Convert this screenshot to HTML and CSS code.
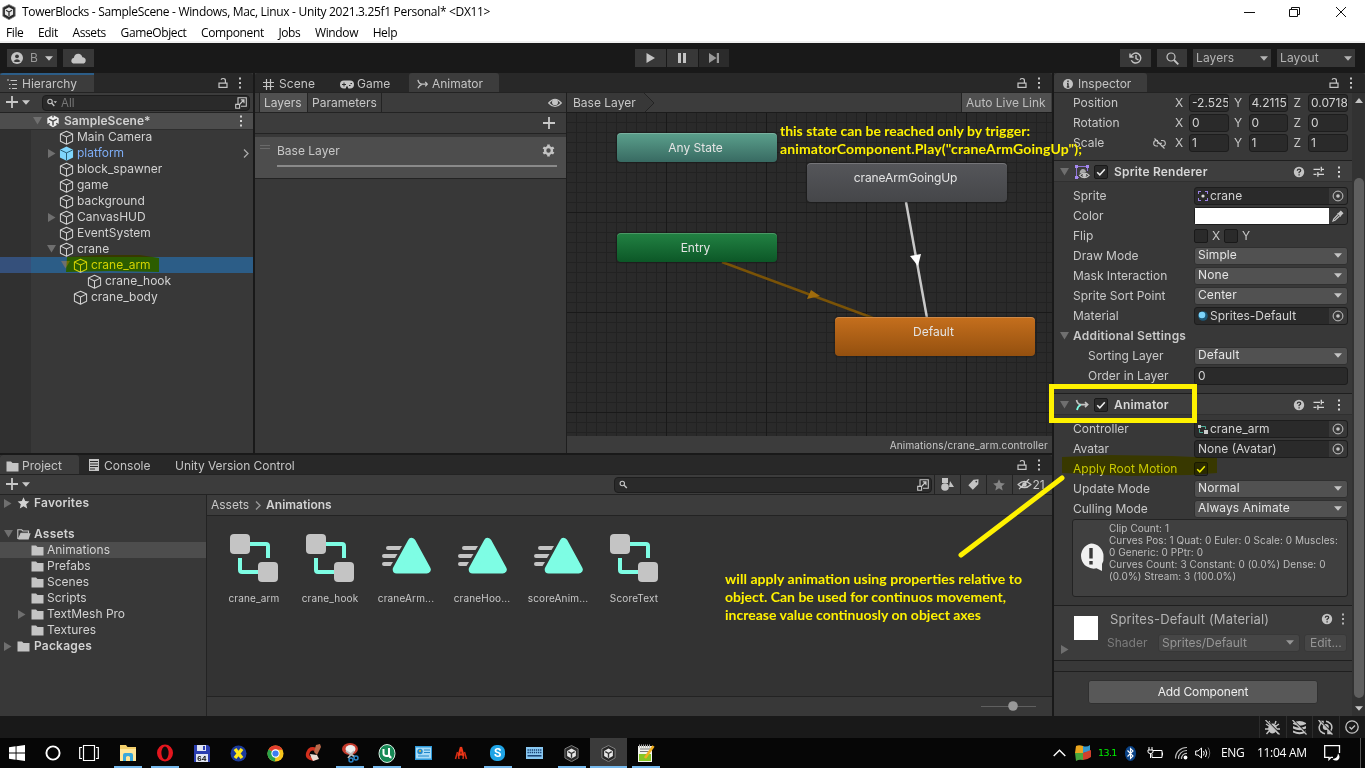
FILE: index.html
```html
<!DOCTYPE html>
<html lang="en">
<head>
<meta charset="utf-8">
<title>TowerBlocks - SampleScene</title>
<link rel="stylesheet" href="styles.css">
</head>
<body>
<svg class="defs" width="0" height="0">
  <defs>
    <symbol id="cube" viewBox="0 0 16 16"><path d="M8 1.300 14.500 4.200V12L8 15.200 1.500 12V4.200ZM1.700 4.400 8 7.400 14.300 4.400M8 7.400V15" fill="none" stroke="currentColor" stroke-width="1.1" stroke-linejoin="round"/></symbol>
    <symbol id="prefab" viewBox="0 0 16 16"><path d="M8 .6 15 3.900V12.200L8 15.700 1 12.200V3.900Z" fill="#7fd6fd"/><path d="M1.400 4.200 8 7.300 14.600 4.200M8 7.300V15.400" fill="none" stroke="#23566e" stroke-width="1"/></symbol>
    <symbol id="unity" viewBox="0 0 16 16"><path d="M8 1 14.5 4.5V11.5L8 15 1.5 11.5V4.5Z" fill="#eee"/><path d="M8 8.2V13M8 8.2 3.6 5.8M8 8.2 12.4 5.8M8 0V4M1 12.5 4.4 10.6M15 12.5 11.6 10.6" stroke="#4d4d4d" stroke-width="1.7"/></symbol>
    <symbol id="unityapp" viewBox="0 0 16 16"><path d="M8 .5 14.2 3.6V12.2L8 15.7 1.8 12.2V3.6Z" fill="#282828" stroke="#8b8b8b" stroke-width=".8"/><path d="M8 3.2 12.1 5.6V10.4L8 12.8 3.9 10.4V5.6Z" fill="#e8e8e8"/><path d="M8 8V12M8 8 5 6.2M8 8 11 6.2" stroke="#333" stroke-width="1.3"/></symbol>
    <symbol id="lock" viewBox="0 0 12 12"><path d="M2 6.2H10V10.3H2ZM8.4 6V3.6Q8.4 1.5 6.2 1.5 4.7 1.5 4 2.6" fill="none" stroke="currentColor" stroke-width="1.2"/></symbol>
    <symbol id="dots" viewBox="0 0 4 12"><path d="M1 .5H3V2.5H1ZM1 5H3V7H1ZM1 9.5H3V11.5H1Z" fill="currentColor"/></symbol>
    <symbol id="down" viewBox="0 0 8 5"><path d="M0 .3H8L4 4.7Z" fill="currentColor"/></symbol>
    <symbol id="fold" viewBox="0 0 9 8"><path d="M0 0H9L4.5 7.5Z" fill="#6f6f6f"/></symbol>
    <symbol id="unfold" viewBox="0 0 8 9"><path d="M0 0V9L7.5 4.5Z" fill="#6f6f6f"/></symbol>
    <symbol id="plus" viewBox="0 0 12 12"><path d="M6 0V12M0 6H12" stroke="currentColor" stroke-width="1.8"/></symbol>
    <symbol id="popout" viewBox="0 0 12 12"><path d="M3 7V.7H11.3V9.3H6M.7 7.4H4.6V11.3H.7ZM5 7 8.800 3M5.800 2.900H9V6.300" fill="none" stroke="currentColor" stroke-width="1.1"/></symbol>
    <symbol id="folder" viewBox="0 0 13 11"><path d="M.5 .5H5L6.5 2H12.5V10.5H.5Z" fill="#c4c4c4"/></symbol>
    <symbol id="folderopen" viewBox="0 0 14 11"><path d="M.8 10V.8H4.6L5.8 2H11.5V4.3H4L1.6 10" fill="none" stroke="#c4c4c4" stroke-width="1.1"/><path d="M4 4.2H13.6L11.6 10.6H1.3Z" fill="#c4c4c4"/></symbol>
    <symbol id="star" viewBox="0 0 12 12"><path d="M6 .2 7.7 4.1 11.9 4.5 8.7 7.3 9.7 11.5 6 9.3 2.3 11.5 3.3 7.3 .1 4.5 4.3 4.1Z" fill="currentColor"/></symbol>
    <symbol id="help" viewBox="0 0 12 12"><circle cx="6" cy="6" r="5.2" fill="#c4c4c4"/><path d="M4.3 4.7Q4.4 3.1 6 3.1 7.7 3.1 7.7 4.5 7.7 5.4 6.1 6.3V7.2M6.1 8.2V9.5" fill="none" stroke="#333" stroke-width="1.3"/></symbol>
    <symbol id="sliders" viewBox="0 0 12 12"><path d="M.5 3.3H7M8.3 3.3H11M8.3 .8V5.6M.5 8.3H3.5M4.9 6V10.7M4.9 8.3H11" stroke="currentColor" stroke-width="1.3"/></symbol>
    <symbol id="target" viewBox="0 0 12 12"><circle cx="6" cy="6" r="4.9" fill="none" stroke="currentColor" stroke-width="1"/><circle cx="6" cy="6" r="1.8" fill="currentColor"/></symbol>
    <symbol id="check" viewBox="0 0 10 10"><path d="M1.2 5.2 3.8 7.8 8.8 2.2" fill="none" stroke="currentColor" stroke-width="1.5"/></symbol>
    <symbol id="anim" viewBox="0 0 12 12"><path d="M1 1Q2 5.5 5.5 5.6H11M9 3.2 11.2 5.6 9 8M5.2 5.8Q2.3 7 1 10" fill="none" stroke="currentColor" stroke-width="1.4"/></symbol>
    <symbol id="controller" viewBox="0 0 48 48"><path d="M20 10H36Q38 10 38 12V24M10 24V36Q10 38 12 38H28" fill="none" stroke="#7efde4" stroke-width="4"/><rect width="20" height="20" rx="4" fill="#c4c4c4"/><rect x="28" y="28" width="20" height="20" rx="4" fill="#c4c4c4"/></symbol>
    <symbol id="clip" viewBox="0 0 50 48"><path d="M7 12H21L18.500 16H7Q5 16 5 14T7 12ZM3 20H16.500L14 24H3Q1 24 1 22T3 20ZM3 28H12L9.500 32H3Q1 32 1 30T3 28Z" fill="#c4c4c4"/><path d="M30.700 8 45.700 35.500H15.700Z" fill="#7efde4" stroke="#7efde4" stroke-width="8" stroke-linejoin="round"/></symbol>
    <symbol id="eyeoff" viewBox="0 0 16 12"><path d="M1 6Q8-1 15 6 8 13 1 6ZM2 11 13 0" fill="none" stroke="currentColor" stroke-width="1.3"/><circle cx="8" cy="6" r="2.4" fill="currentColor"/></symbol>
  </defs>
</svg>

<div class="screen">
  <header class="titlebar">
    <div class="title-row">
      <svg width="16" height="16"><use href="#unityapp"/></svg>
      <span class="win-title">TowerBlocks - SampleScene - Windows, Mac, Linux - Unity 2021.3.25f1 Personal* &lt;DX11&gt;</span>
      <svg class="win-buttons" width="106" height="12" viewBox="0 0 106 12"><path d="M0 6.500H11M45.500 3.500H53.500V10.500H45.500ZM47.500 3.500V1.500H55.500V8.500H53.500M92 1 102 11M102 1 92 11" fill="none" stroke="#111" stroke-width="1"/></svg>
    </div>
    <nav class="menus"><span>File</span><span>Edit</span><span>Assets</span><span>GameObject</span><span>Component</span><span>Jobs</span><span>Window</span><span>Help</span></nav>
  </header>

  <div class="toolbar">
    <div class="tb account"><svg width="12" height="12" viewBox="0 0 12 12"><circle cx="6" cy="6" r="6" fill="#c4c4c4"/><circle cx="6" cy="4.300" r="1.900" fill="#383838"/><path d="M2.500 9.200Q6 5.200 9.500 9.200Q6 11 2.500 9.200Z" fill="#383838"/></svg><span class="dim">B</span><svg width="8" height="5"><use href="#down"/></svg></div>
    <div class="tb cloud"><svg width="15" height="11" viewBox="0 0 15 11"><path d="M3.500 10.500Q.3 10.500 .3 7.700 .3 5.200 2.900 4.800 3.500 .7 7.300 .7 10.500 .7 11.400 4.200 14.700 4.400 14.700 7.400 14.700 10.500 11.500 10.500Z" fill="#c4c4c4"/></svg></div>
    <div class="tb play"><svg width="9" height="10" viewBox="0 0 9 10"><path d="M.5 0V10L9 5Z" fill="#c4c4c4"/></svg></div>
    <div class="tb pause"><svg width="9" height="10" viewBox="0 0 9 10"><path d="M0 0H3V10H0ZM5 0H8V10H5Z" fill="#c4c4c4"/></svg></div>
    <div class="tb step"><svg width="10" height="10" viewBox="0 0 10 10"><path d="M0 0V10L7.500 5ZM7.800 0H10V10H7.800Z" fill="#999"/></svg></div>
    <div class="tb history"><svg width="13" height="12" viewBox="0 0 13 12"><path d="M2 4.500A5 5 0 1 1 2.300 8.300M1 1.500V5H4.600M7 3V6.500L9.500 8" fill="none" stroke="#c4c4c4" stroke-width="1.400"/></svg></div>
    <div class="tb find"><svg width="13" height="13" viewBox="0 0 13 13"><circle cx="5" cy="5" r="4" fill="none" stroke="#c4c4c4" stroke-width="1.200"/><path d="M8 8 12.300 12.300" stroke="#c4c4c4" stroke-width="1.800"/></svg></div>
    <div class="tb drop layers"><span>Layers</span><svg width="8" height="5"><use href="#down"/></svg></div>
    <div class="tb drop layout"><span>Layout</span><svg width="8" height="5"><use href="#down"/></svg></div>
  </div>

  <main class="workspace">
    <div class="left">
      <div class="top-row">
        <section class="panel hierarchy">
          <div class="tabs"><div class="tab on focus"><svg width="12" height="11" viewBox="0 0 12 11"><path d="M0 1H2M3.500 1.500H10M2 5.500H3.500M5 5.500H10M2 9.500H3.500M5 9.500H10" stroke="#c4c4c4" stroke-width="1.200"/></svg>Hierarchy</div><div class="tools"><svg width="12" height="12"><use href="#lock"/></svg><svg width="4" height="12"><use href="#dots"/></svg></div></div>
          <div class="bar">
            <svg width="12" height="12"><use href="#plus"/></svg><svg class="caret" width="8" height="5"><use href="#down"/></svg>
            <div class="search"><svg width="10" height="9" viewBox="0 0 10 9"><circle cx="3" cy="3.500" r="2.200" fill="none" stroke="#c4c4c4" stroke-width="1.100"/><path d="M4.600 5.100 7.300 8" stroke="#c4c4c4" stroke-width="1.400"/><path d="M6.500 3.300H10L8.300 5.300Z" fill="#c4c4c4"/></svg><span class="ph">All</span><svg class="pop" width="12" height="12"><use href="#popout"/></svg></div>
          </div>
          <div class="tree">
            <div class="row scene"><svg class="f" width="9" height="8"><use href="#fold"/></svg><svg width="14" height="14" viewBox="0 0 16 16"><use href="#unity" width="16" height="16"/></svg><b>SampleScene*</b><svg class="end" width="4" height="12"><use href="#dots"/></svg></div>
            <div class="row d1"><i></i><svg width="15" height="15"><use href="#cube"/></svg><span>Main Camera</span></div>
            <div class="row d1 blue"><i><svg width="8" height="9"><use href="#unfold"/></svg></i><svg width="15" height="15"><use href="#prefab"/></svg><span>platform</span><svg class="end chev" width="6" height="9" viewBox="0 0 6 9"><path d="M1 .5 5 4.500 1 8.500" fill="none" stroke="#aaa" stroke-width="1.300"/></svg></div>
            <div class="row d1"><i></i><svg width="15" height="15"><use href="#cube"/></svg><span>block_spawner</span></div>
            <div class="row d1"><i></i><svg width="15" height="15"><use href="#cube"/></svg><span>game</span></div>
            <div class="row d1"><i></i><svg width="15" height="15"><use href="#cube"/></svg><span>background</span></div>
            <div class="row d1"><i><svg width="8" height="9"><use href="#unfold"/></svg></i><svg width="15" height="15"><use href="#cube"/></svg><span>CanvasHUD</span></div>
            <div class="row d1"><i></i><svg width="15" height="15"><use href="#cube"/></svg><span>EventSystem</span></div>
            <div class="row d1"><i class="open"><svg width="9" height="8"><use href="#fold"/></svg></i><svg width="15" height="15"><use href="#cube"/></svg><span>crane</span></div>
            <div class="row d2 sel"><i class="open"><svg width="9" height="8"><use href="#fold"/></svg></i><svg width="15" height="15"><use href="#cube"/></svg><span>crane_arm</span></div>
            <div class="row d3"><i></i><svg width="15" height="15"><use href="#cube"/></svg><span>crane_hook</span></div>
            <div class="row d2"><i></i><svg width="15" height="15"><use href="#cube"/></svg><span>crane_body</span></div>
          </div>
        </section>

        <section class="panel animator">
          <div class="tabs">
            <div class="tab t-scene"><svg width="11" height="11" viewBox="0 0 11 11"><path d="M3.500 0V11M7.500 0V11M0 3.500H11M0 7.500H11" stroke="#c4c4c4" stroke-width="1.200"/></svg>Scene</div>
            <div class="tab t-game"><svg width="14" height="9" viewBox="0 0 14 9"><rect y=".5" width="14" height="8" rx="4" fill="#c4c4c4"/><path d="M2 4.500H6M4 2.500V6.500M9 5.500H10.500M10.500 3.500H12M6 9 7 6.500 8 9" stroke="#282828"/></svg>Game</div>
            <div class="tab on t-anim"><svg width="11" height="11" viewBox="0 0 12 12"><use href="#anim" width="12" height="12"/></svg>Animator</div>
            <div class="tools"><svg width="12" height="12"><use href="#lock"/></svg><svg width="4" height="12"><use href="#dots"/></svg></div>
          </div>
          <div class="anim-body">
            <div class="layers-col">
              <div class="bar sub"><span class="seg on">Layers</span><span class="seg">Parameters</span><svg class="eye" width="14" height="10" viewBox="0 0 14 10"><path d="M.7 5Q7-2.500 13.300 5 7 12 .7 5Z" fill="none" stroke="#c4c4c4" stroke-width="1.200"/><circle cx="7" cy="4.200" r="3" fill="#c4c4c4"/></svg></div>
              <div class="add"><svg width="12" height="12"><use href="#plus"/></svg></div>
              <div class="layer-item">
                <div class="grip"></div><span>Base Layer</span>
                <svg width="13" height="13" viewBox="0 0 13 13"><circle cx="6.500" cy="6.500" r="3.400" fill="none" stroke="#c4c4c4" stroke-width="2.400"/><path d="M6.500 .5V3M6.500 10V12.500M1.300 3.500 3.300 4.700M9.700 8.300 11.700 9.500M11.700 3.500 9.700 4.700M3.300 8.300 1.300 9.500" stroke="#c4c4c4" stroke-width="2.600"/></svg>
                <div class="weight"></div>
              </div>
            </div>
            <div class="graph-col">
              <div class="bar crumb"><span>Base Layer</span><svg width="12" height="20" viewBox="0 0 12 20"><path d="M0 0 10 10 0 20Z" fill="#383838"/><path d="M0 0 10 10 0 20" fill="none" stroke="#232323"/></svg><span class="live">Auto Live Link</span></div>
              <div class="canvas">
                <svg class="wires" width="485" height="323" viewBox="0 0 485 323">
                  <path d="M339 89 360 205" stroke="#c9c9c9" stroke-width="2.500"/><path d="M343 143 354 141 351 153Z" fill="#fff"/>
                  <path d="M155 149 306 205" stroke="#7a5307" stroke-width="2.500"/><path d="M244 177 253 183 240 186Z" fill="#a06c0c"/>
                </svg>
                <div class="node any">Any State</div>
                <div class="node goingup">craneArmGoingUp</div>
                <div class="node entry">Entry</div>
                <div class="node def">Default</div>
              </div>
              <div class="path">Animations/crane_arm.controller</div>
            </div>
          </div>
        </section>
      </div>

      <section class="panel project">
        <div class="tabs">
          <div class="tab on t-proj"><svg width="13" height="11"><use href="#folder"/></svg>Project</div>
          <div class="tab t-con"><svg width="10" height="12" viewBox="0 0 10 12"><path d="M0 0H10V12H0Z" fill="#c4c4c4"/><path d="M1 2.500H9M1 5H9M1 7.500H9M1 10H6" stroke="#282828"/></svg>Console</div>
          <div class="tab t-uvc">Unity Version Control</div>
          <div class="tools"><svg width="12" height="12"><use href="#lock"/></svg><svg width="4" height="12"><use href="#dots"/></svg></div>
        </div>
        <div class="bar">
          <svg width="12" height="12"><use href="#plus"/></svg><svg class="caret" width="8" height="5"><use href="#down"/></svg>
          <div class="search wide"><svg width="9" height="9" viewBox="0 0 9 9"><circle cx="3.300" cy="3.500" r="2.200" fill="none" stroke="#c4c4c4" stroke-width="1.100"/><path d="M4.900 5.100 7.800 8" stroke="#c4c4c4" stroke-width="1.400"/></svg><svg class="pop" width="12" height="12"><use href="#popout"/></svg></div>
          <div class="pb"><svg width="13" height="13" viewBox="0 0 13 13"><path d="M1 0H7V5H1ZM9 3 13 9H8Z" fill="#c4c4c4"/><circle cx="4" cy="9" r="3.800" fill="#c4c4c4"/></svg></div>
          <div class="pb"><svg width="11" height="11" viewBox="0 0 11 11"><path d="M5.500 .8 10.500 .3 10.300 5.300 4.800 10.800 .3 6.200Z" fill="#c4c4c4"/><circle cx="8.300" cy="2.600" r=".9" fill="#383838"/></svg></div>
          <div class="pb dimstar"><svg width="12" height="12"><use href="#star"/></svg></div>
          <div class="pb hid"><svg width="15" height="11"><use href="#eyeoff"/></svg><span>21</span></div>
        </div>
        <div class="proj-body">
          <div class="folders">
            <div class="row"><i><svg width="8" height="9"><use href="#unfold"/></svg></i><svg width="13" height="12"><use href="#star"/></svg><b>Favorites</b></div>
            <div class="row gap"><i><svg width="9" height="8"><use href="#fold"/></svg></i><svg width="14" height="11"><use href="#folderopen"/></svg><b>Assets</b></div>
            <div class="row k on"><i></i><svg width="13" height="11"><use href="#folder"/></svg><span>Animations</span></div>
            <div class="row k"><i></i><svg width="13" height="11"><use href="#folder"/></svg><span>Prefabs</span></div>
            <div class="row k"><i></i><svg width="13" height="11"><use href="#folder"/></svg><span>Scenes</span></div>
            <div class="row k"><i></i><svg width="13" height="11"><use href="#folder"/></svg><span>Scripts</span></div>
            <div class="row k"><i><svg width="8" height="9"><use href="#unfold"/></svg></i><svg width="13" height="11"><use href="#folder"/></svg><span>TextMesh Pro</span></div>
            <div class="row k"><i></i><svg width="13" height="11"><use href="#folder"/></svg><span>Textures</span></div>
            <div class="row"><i><svg width="8" height="9"><use href="#unfold"/></svg></i><svg width="13" height="11"><use href="#folder"/></svg><b>Packages</b></div>
          </div>
          <div class="assets">
            <div class="where"><span>Assets</span><svg width="6" height="9" viewBox="0 0 6 9"><path d="M1 .5 5 4.500 1 8.500" fill="none" stroke="#999" stroke-width="1.400"/></svg><b>Animations</b></div>
            <div class="grid">
              <div class="asset"><svg width="48" height="48"><use href="#controller"/></svg><span>crane_arm</span></div>
              <div class="asset"><svg width="48" height="48"><use href="#controller"/></svg><span>crane_hook</span></div>
              <div class="asset"><svg width="50" height="48"><use href="#clip"/></svg><span>craneArm...</span></div>
              <div class="asset"><svg width="50" height="48"><use href="#clip"/></svg><span>craneHoo...</span></div>
              <div class="asset"><svg width="50" height="48"><use href="#clip"/></svg><span>scoreAnim...</span></div>
              <div class="asset"><svg width="48" height="48"><use href="#controller"/></svg><span>ScoreText</span></div>
            </div>
            <div class="zoombar"><svg width="56" height="10" viewBox="0 0 56 10"><path d="M0 5.500H55" stroke="#606060"/><circle cx="32" cy="5" r="4.800" fill="#999"/></svg></div>
          </div>
        </div>
      </section>
    </div>

    <section class="panel inspector">
      <div class="tabs"><div class="tab on t-insp"><svg width="10" height="10" viewBox="0 0 10 10"><circle cx="5" cy="5" r="5" fill="#c4c4c4"/><path d="M5 1.500V3.200M5 4.200V8.300M3.800 8H6.300M4 4.600H5" stroke="#333" stroke-width="1.400"/></svg>Inspector</div><div class="tools"><svg width="12" height="12"><use href="#lock"/></svg><svg width="4" height="12"><use href="#dots"/></svg></div></div>
      <div class="insp-wrap">
        <div class="insp">
          <div class="group g0">
            <div class="p"><label>Position</label><em>X</em><span class="num">-2.525</span><em>Y</em><span class="num">4.2115</span><em>Z</em><span class="num">0.0718</span></div>
            <div class="p"><label>Rotation</label><em>X</em><span class="num">0</span><em>Y</em><span class="num">0</span><em>Z</em><span class="num">0</span></div>
            <div class="p"><label>Scale<svg class="unlink" width="13" height="11" viewBox="0 0 13 11"><path d="M5 2.500H3.500Q.7 2.500 .7 5.300T3.500 8H5M8 2.500H9.500Q12.300 2.500 12.300 5.300T9.500 8H8M4 5.300H9M1.500 .5 11.500 10.500" fill="none" stroke="#c4c4c4" stroke-width="1.100"/></svg></label><em>X</em><span class="num">1</span><em>Y</em><span class="num">1</span><em>Z</em><span class="num">1</span></div>
          </div>
          <div class="comp">
            <svg width="9" height="8"><use href="#fold"/></svg>
            <svg class="ci" width="15" height="14" viewBox="0 0 15 14"><path d="M1.500 1.500H12.500V6M1.500 1.500V12.500H4" fill="none" stroke="#8f74d8"/><path d="M0 0H3V3H0ZM11 0H14V3H11ZM0 11H3V14H0Z" fill="#a68af0"/><path d="M4.500 8.500Q5 4 8 4 10.500 4 11 7Z" fill="#aaa"/><path d="M4.500 10.300Q9.300 5.800 14.200 10.300 9.300 15 4.500 10.300Z" fill="#333" stroke="#c4c4c4" stroke-width="1.100"/><circle cx="9.400" cy="10.200" r="1.900" fill="#c4c4c4"/></svg>
            <span class="cb"><svg width="10" height="10"><use href="#check"/></svg></span><b>Sprite Renderer</b>
            <svg class="h" width="12" height="12"><use href="#help"/></svg><svg width="12" height="12"><use href="#sliders"/></svg><svg width="4" height="12"><use href="#dots"/></svg>
          </div>
          <div class="group g1">
            <div class="p"><label>Sprite</label><span class="obj"><svg width="10" height="10" viewBox="0 0 10 10"><path d="M0 0H3V1H1V3H0ZM10 0H7V1H9V3H10ZM0 10H3V9H1V7H0ZM10 10H7V9H9V7H10Z" fill="#9b80e6"/><circle cx="5" cy="5" r="1.600" fill="#ddd"/></svg>crane<span class="tg"><svg width="12" height="12"><use href="#target"/></svg></span></span></div>
            <div class="p"><label>Color</label><span class="color"><span class="swatch"></span><svg width="12" height="12" viewBox="0 0 12 12"><path d="M6 4.500 1.700 9 1 11 3 10.300 7.500 6" fill="none" stroke="#c4c4c4" stroke-width="1.200"/><path d="M5 3.300 8.700 7 9.300 5.500 11.500 3.300 8.800 .5 6.600 2.700Z" fill="#c4c4c4"/></svg></span></div>
            <div class="p"><label>Flip</label><span class="cb"></span><em class="fx">X</em><span class="cb"></span><em class="fx">Y</em></div>
            <div class="p"><label>Draw Mode</label><span class="sel-box">Simple<svg width="8" height="5"><use href="#down"/></svg></span></div>
            <div class="p"><label>Mask Interaction</label><span class="sel-box">None<svg width="8" height="5"><use href="#down"/></svg></span></div>
            <div class="p"><label>Sprite Sort Point</label><span class="sel-box">Center<svg width="8" height="5"><use href="#down"/></svg></span></div>
            <div class="p"><label>Material</label><span class="obj"><svg width="10" height="10" viewBox="0 0 10 10"><circle cx="5" cy="5" r="4.800" fill="#1d5877"/><circle cx="4" cy="4" r="3.300" fill="#7cd3f9"/></svg>Sprites-Default<span class="tg"><svg width="12" height="12"><use href="#target"/></svg></span></span></div>
            <div class="p foldrow"><svg width="9" height="8"><use href="#fold"/></svg><b>Additional Settings</b></div>
            <div class="p in"><label>Sorting Layer</label><span class="sel-box">Default<svg width="8" height="5"><use href="#down"/></svg></span></div>
            <div class="p in"><label>Order in Layer</label><span class="txt">0</span></div>
          </div>
          <div class="comp">
            <svg width="9" height="8"><use href="#fold"/></svg>
            <svg class="ci" width="14" height="12" viewBox="0 0 14 12"><path d="M1 1Q2 5.500 5.500 5.600H12M9.500 3 12.200 5.600 9.500 8.200" fill="none" stroke="#c4c4c4" stroke-width="1.600"/><path d="M5.200 6Q2.300 7 1.500 11" fill="none" stroke="#7efde4" stroke-width="1.800"/></svg>
            <span class="cb"><svg width="10" height="10"><use href="#check"/></svg></span><b>Animator</b>
            <svg class="h" width="12" height="12"><use href="#help"/></svg><svg width="12" height="12"><use href="#sliders"/></svg><svg width="4" height="12"><use href="#dots"/></svg>
          </div>
          <div class="group g2">
            <div class="p"><label>Controller</label><span class="obj"><svg width="10" height="9" viewBox="0 0 10 9"><path d="M3 1.500H7.500V4M1.500 4V7.500H5" fill="none" stroke="#4fae9a"/><path d="M0 0H3V3H0ZM6 5H10V9H6Z" fill="#ccc"/></svg>crane_arm<span class="tg"><svg width="12" height="12"><use href="#target"/></svg></span></span></div>
            <div class="p"><label>Avatar</label><span class="obj">None (Avatar)<span class="tg"><svg width="12" height="12"><use href="#target"/></svg></span></span></div>
            <div class="p"><label>Apply Root Motion</label><span class="cb"><svg width="10" height="10"><use href="#check"/></svg></span></div>
            <div class="p"><label>Update Mode</label><span class="sel-box">Normal<svg width="8" height="5"><use href="#down"/></svg></span></div>
            <div class="p"><label>Culling Mode</label><span class="sel-box">Always Animate<svg width="8" height="5"><use href="#down"/></svg></span></div>
          </div>
          <div class="info">
            <svg width="27" height="29" viewBox="0 0 27 29"><path d="M13 .5A12.700 12.700 0 0 1 25.500 13Q26 18 24 21V28L18.500 25.300A12.700 12.700 0 1 1 13 .5Z" fill="#f0f0f0"/><path d="M13 5V15.500M13 18V21.500" stroke="#383838" stroke-width="3.400"/></svg>
            <p>Clip Count: 1<br>Curves Pos: 1 Quat: 0 Euler: 0 Scale: 0 Muscles:<br>0 Generic: 0 PPtr: 0<br>Curves Count: 3 Constant: 0 (0.0%) Dense: 0<br>(0.0%) Stream: 3 (100.0%)</p>
          </div>
          <div class="material">
            <div class="mat-side"><div class="thumb"></div><svg width="8" height="9"><use href="#unfold"/></svg></div>
            <div class="mat-main">
              <div class="mat-head"><span>Sprites-Default (Material)</span><svg width="12" height="12"><use href="#help"/></svg><svg width="4" height="12"><use href="#dots"/></svg></div>
              <div class="mat-shader"><label>Shader</label><span class="shader-box">Sprites/Default<svg width="8" height="5"><use href="#down"/></svg></span><span class="edit">Edit...</span></div>
            </div>
          </div>
          <div class="strip"></div>
          <button class="addc">Add Component</button>
        </div>
        <div class="scroll"><svg width="8" height="5" viewBox="0 0 8 5"><path d="M0 5H8L4 0Z" fill="#c4c4c4"/></svg><div class="thumbbar"></div><svg width="8" height="5"><use href="#down"/></svg></div>
      </div>
    </section>
  </main>

  <div class="status">
    <div><svg width="15" height="15" viewBox="0 0 15 15"><ellipse cx="7.500" cy="8.500" rx="4.300" ry="5" fill="#c4c4c4"/><path d="M5 4 4 1M10 4 11 1M4 6 1 4M11 6 14 4M4 9H0M11 9H15M4 11 1.500 14M11 11 13.500 14" stroke="#c4c4c4" stroke-width="1.400"/><path d="M2 1 15 14" stroke="#191919" stroke-width="1.600"/><path d="M.5 0 14.500 14.500" stroke="#c4c4c4" stroke-width="1.200"/></svg></div>
    <div><svg width="15" height="15" viewBox="0 0 15 15"><path d="M1 3Q7.500-1 14 3V4Q7.500 7.500 1 4ZM1 6Q7.500 9.500 14 6V8.500Q7.500 12 1 8.500ZM1 10.500Q7.500 14 14 10.500V12.500Q7.500 16 1 12.500Z" fill="#c4c4c4"/><path d="M2 1 15 14" stroke="#191919" stroke-width="1.600"/><path d="M.5 0 14.500 14.500" stroke="#c4c4c4" stroke-width="1.200"/></svg></div>
    <div><svg width="15" height="15" viewBox="0 0 15 15"><path d="M4.500 2A6.300 6.300 0 0 0 3 12M10.500 13A6.300 6.300 0 0 0 12 3M8 1.200A6.300 6.300 0 0 1 12 3.500M7 13.800A6.300 6.300 0 0 1 3 11.500M1 1.500H5V5M14 13.500H10V10" fill="none" stroke="#c4c4c4" stroke-width="1.500"/><circle cx="7.800" cy="7" r="3" fill="#c4c4c4"/><path d="M2 1 15 14" stroke="#191919" stroke-width="1.600"/><path d="M.5 0 14.500 14.500" stroke="#c4c4c4" stroke-width="1.200"/></svg></div>
    <div><svg width="14" height="14" viewBox="0 0 14 14"><circle cx="7" cy="7" r="6.200" fill="none" stroke="#c4c4c4" stroke-width="1.300"/><path d="M4.500 7 6.500 9 10 5.500" fill="none" stroke="#c4c4c4" stroke-width="1.300"/></svg></div>
  </div>

  <footer class="taskbar">
    <div class="task start"><svg width="16" height="16" viewBox="0 0 16 16"><path d="M0 2.300 6.600 1.300V7.500H0ZM7.500 1.200 16 0V7.500H7.500ZM0 8.500H6.600V14.700L0 13.700ZM7.500 8.500H16V16L7.500 14.800Z" fill="#fff"/></svg></div>
    <div class="task"><svg width="16" height="16" viewBox="0 0 16 16"><circle cx="8" cy="8" r="6.600" fill="none" stroke="#fff" stroke-width="1.900"/></svg></div>
    <div class="task views"><svg width="20" height="18" viewBox="0 0 20 18"><path d="M4.500 1.500H15.500V16.500H4.500ZM3 3.500H.7V14.500H3M17 3.500H19.300V14.500H17" fill="none" stroke="#fff" stroke-width="1.200"/></svg></div>
    <div class="task run"><svg width="18" height="18" viewBox="0 0 18 18"><path d="M1 1H7L8.500 3H17V17H1Z" fill="#f3cf6b"/><path d="M1 5H17V17H1Z" fill="#ffe79a"/><path d="M4 17V11Q4 9 6 9H12Q14 9 14 11V17H11V13Q9 11 7 13V17Z" fill="#38a8dc"/></svg></div>
    <div class="task run"><svg width="18" height="18" viewBox="0 0 18 18"><ellipse cx="9" cy="9" rx="8" ry="8.500" fill="#e3161e"/><ellipse cx="9" cy="9" rx="3.600" ry="6.500" fill="#090909"/></svg></div>
    <div class="task"><svg width="16" height="17" viewBox="0 0 16 17"><path d="M0 0H14L16 2V17H0Z" fill="#2a3db0"/><path d="M3 0H12V6H3ZM2 9H14V17H2Z" fill="#dfe4f2"/><path d="M9 1H11V5H9Z" fill="#2a3db0"/><text x="3" y="16" class="px64">64</text></svg></div>
    <div class="task"><svg width="17" height="17" viewBox="0 0 17 17"><circle cx="8.500" cy="8.500" r="8" fill="#1c3b9c"/><path d="M5 4 12 13M12 4 5 13" stroke="#ffe81a" stroke-width="3.500"/></svg></div>
    <div class="task"><svg width="17" height="17" viewBox="0 0 18 18"><circle cx="9" cy="9" r="8.500" fill="#f7c51c"/><path d="M9 9 1.600 4.700A8.500 8.500 0 0 1 16.500 5H9Z" fill="#e23d2e"/><path d="M9 9 8.500 17.500A8.500 8.500 0 0 1 1.600 4.700Z" fill="#29a34b"/><circle cx="9" cy="9" r="4.400" fill="#fff"/><circle cx="9" cy="9" r="3.300" fill="#3d7cf0"/></svg></div>
    <div class="task"><svg width="18" height="18" viewBox="0 0 18 18"><path d="M12 5.500Q6 3 4 8.500T9 15L12 14" fill="none" stroke="#d22f1d" stroke-width="3.500"/><path d="M10 8 12 1 16 0 17 3 13 11Z" fill="#b8694a"/><path d="M6 10 13 11 15 15 9 17 7 13Z" fill="#e9dcd3"/></svg></div>
    <div class="task run"><svg width="18" height="20" viewBox="0 0 18 20"><ellipse cx="9" cy="6" rx="8" ry="6" fill="#c43a2c"/><ellipse cx="9.500" cy="6" rx="5" ry="4" fill="#eee"/><path d="M5 8 14 14M13 8 7 15" stroke="#bbb" stroke-width="1.800"/><circle cx="10" cy="17" r="2" fill="none" stroke="#2b85c8" stroke-width="1.500"/><circle cx="15" cy="15" r="2" fill="none" stroke="#2b85c8" stroke-width="1.500"/></svg></div>
    <div class="task run"><svg width="18" height="19" viewBox="0 0 18 19"><ellipse cx="9" cy="9.500" rx="8" ry="9" fill="#178a56" stroke="#d9eee5"/><path d="M5.500 5V10Q6.500 13 11 11.500V4M11 10.500Q11.500 13.500 13.500 13.500" fill="none" stroke="#fff" stroke-width="2"/></svg></div>
    <div class="task"><svg width="17" height="15" viewBox="0 0 17 15"><rect width="17" height="14" fill="#2f9bdc"/><path d="M1 1.500H16V12.500H1Z" fill="#a9dcf7"/><circle cx="5" cy="5.500" r="2.700" fill="#2389ca"/><circle cx="5" cy="5" r="1" fill="#f5bb35"/><path d="M9 4H15M9 6.500H15M3 10H14" stroke="#2387c9" stroke-width="1.200"/></svg></div>
    <div class="task"><svg width="14" height="15" viewBox="0 0 14 15"><path d="M7 1 4.500 10M7 1 9.500 10M4 8.500H10" fill="none" stroke="#f03718" stroke-width="2.200"/><path d="M3.500 6 1.500 13M10.500 6 12.500 13M4.500 10 5 13M9.500 10 9 13" stroke="#d62c14" stroke-width="1.500"/></svg></div>
    <div class="task run"><svg width="15" height="18" viewBox="0 0 15 18"><rect y="1" width="15" height="16" rx="6.500" fill="#1fa4e6"/><text x="4" y="13" class="skype">S</text></svg></div>
    <div class="task"><svg width="17" height="12" viewBox="0 0 17 12"><rect width="17" height="12" fill="#89c8f2"/><path d="M1.500 3H15.500M1.500 5.500H15.500" stroke="#153e70" stroke-width="1.600" stroke-dasharray="1.300 .8"/><path d="M1.500 8.800H15.500" stroke="#153e70" stroke-width="1.500"/></svg></div>
    <div class="task run"><svg width="17" height="17" viewBox="0 0 16 16"><use href="#unityapp" width="16" height="16"/></svg></div>
    <div class="task run active"><svg width="17" height="17" viewBox="0 0 16 16"><use href="#unityapp" width="16" height="16"/></svg></div>
    <div class="task run"><svg width="18" height="19" viewBox="0 0 18 19"><path d="M1 2H15V18H1Z" fill="#f4f5ee"/><path d="M2 10H14V17H2Z" fill="#86c625"/><path d="M3 5H13M3 7.500H13" stroke="#777"/><path d="M2 2H14" stroke="#aaa" stroke-width="3" stroke-dasharray="1 1"/><path d="M16.500 2 8 14" stroke="#f2b021" stroke-width="2.600"/></svg></div>
    <div class="tray">
      <svg class="more" width="13" height="8" viewBox="0 0 13 8"><path d="M.7 7 6.500 1.200 12.300 7" fill="none" stroke="#fff" stroke-width="1.400"/></svg>
      <svg class="avg" width="16" height="16" viewBox="0 0 16 16"><path d="M1 1Q4-.5 8 1V8H0Z" fill="#eaa51e"/><path d="M8 1Q12 2.500 15 0V7L8 8Z" fill="#3498cc"/><path d="M0 8H8V15Q4 14 1 16Z" fill="#48a83e"/><path d="M8 8 16 5V12Q12 15 8 15Z" fill="#d1402c"/></svg>
      <span class="temp">13.1</span>
      <svg class="bt" width="11" height="15" viewBox="0 0 11 15"><ellipse cx="5.500" cy="7.500" rx="5.500" ry="7.500" fill="#0a4387"/><path d="M2.500 4.500 8 10 5.500 12.500V2.500L8 5 2.500 10.500" fill="none" stroke="#fff" stroke-width="1.100"/></svg>
      <svg class="bat" width="17" height="12" viewBox="0 0 17 12"><path d="M6 3.500H15V10.500H5V7M15.500 5.500V8.500M2 0V3M5 0V3M1 3H6V5Q6 6.500 3.500 6.500T1 5ZM3.500 6.500V11" fill="none" stroke="#fff"/></svg>
      <svg class="wifi" width="14" height="14" viewBox="0 0 14 14"><path d="M1.500 12.500A11 11 0 0 1 13 1.500M4.500 13A8 8 0 0 1 13 4.500M7.500 13A5 5 0 0 1 13 7.500" fill="none" stroke="#bbb" stroke-width="1.200"/><circle cx="11.500" cy="11.500" r="1.900" fill="#fff"/></svg>
      <svg class="vol" width="16" height="14" viewBox="0 0 16 14"><path d="M.7 5H3L6.500 2V12L3 9H.7ZM8.500 5Q10 7 8.500 9.500M10.500 3.500Q13 7 10.500 11" fill="none" stroke="#fff"/><path d="M13 1.500Q16.500 7 13 12.500" fill="none" stroke="#777"/></svg>
      <span class="lang">ENG</span><span class="clock">11:04 AM</span>
      <svg class="note" width="17" height="16" viewBox="0 0 17 16"><path d="M9 12.300H7L5 14.500V12.300H.7V.7H15.500V8" fill="none" stroke="#fff" stroke-width="1.300"/><path d="M14 8.500Q17 12 14 15 11 16.500 8.500 14 13.500 13.500 14 8.500Z" fill="#fff"/></svg>
      <span class="desk"></span>
    </div>
  </footer>

  <svg class="marks highlight" width="1365" height="768"><path d="M67 257 100 255 140 255 159 258V272L110 271 66 272Z"/><path d="M1062 457 1110 455 1172 456 1217 458V473L1190 475 1130 476 1062 473Z"/></svg>
  <svg class="marks" width="1365" height="768">
    <rect x="1051.500" y="386.500" width="143" height="34" fill="none" stroke="#fff200" stroke-width="5"/>
    <path d="M961 555 1062 478" stroke="#fff200" stroke-width="5" stroke-linecap="round"/>
    <g class="note-text">
      <text x="780" y="136" textLength="250">this state can be reached only by trigger:</text>
      <text x="780" y="154" textLength="302">animatorComponent.Play("craneArmGoingUp");</text>
      <text x="725" y="584" textLength="297">will apply animation using properties relative to</text>
      <text x="725" y="602" textLength="281">object. Can be used for continuos movement,</text>
      <text x="725" y="620" textLength="256">increase value continuosly on object axes</text>
    </g>
  </svg>
</div>
</body>
</html>
```
FILE: styles.css
```css
* { box-sizing: border-box; }
body { margin: 0; width: 1365px; height: 768px; overflow: hidden; background: #191919; color: #c8c8c8; font: 12px/16px Inter, "Liberation Sans", sans-serif; letter-spacing: 0; }
svg { display: block; flex: none; }
.defs { position: absolute; }
.screen { width: 1365px; height: 768px; display: flex; flex-direction: column; position: relative; overflow: hidden; }
b { font-weight: 600; letter-spacing: .2px; }
label { white-space: nowrap; }

.titlebar { height: 43px; background: #fff; border-bottom: 2px solid #f0f0f0; color: #000; font: 12px/16px "Open Sans", "Noto Sans", sans-serif; letter-spacing: -.32px; }
.title-row { display: flex; align-items: center; height: 23px; padding-left: 1px; gap: 5px; }
.win-buttons { margin-left: auto; margin-right: 15px; }
.menus { display: flex; gap: 14.6px; padding-left: 6px; height: 19px; align-items: center; letter-spacing: -.38px; }

.toolbar { height: 30px; display: flex; align-items: center; padding-left: 7px; background: #191919; }
.tb { height: 18px; background: #383838; display: flex; align-items: center; justify-content: center; flex: none; }
.account { width: 50px; gap: 7px; }
.dim { color: #999; }
.cloud { width: 31px; margin-left: 6px; }
.play { width: 31px; margin-left: 541px; }
.pause { width: 31px; margin-left: 1px; }
.step { width: 30px; margin-left: 1px; background: #2b2b2b; }
.history { width: 31px; margin-left: 391px; }
.find { width: 30px; margin-left: 6px; }
.drop { width: 78px; margin-left: 6px; justify-content: space-between; padding: 0 3px; color: #b4b4b4; letter-spacing: .1px; }

.workspace { height: 643px; display: flex; gap: 2px; }
.left { width: 1052px; display: flex; flex-direction: column; gap: 2px; }
.top-row { display: flex; gap: 2px; height: 380px; }
.panel { background: #383838; display: flex; flex-direction: column; overflow: hidden; }
.hierarchy { width: 253px; }
.animator { width: 797px; }
.project { height: 261px; }
.inspector { width: 311px; }

.tabs { height: 19px; background: #282828; display: flex; align-items: center; border-radius: 3px 3px 0 0; flex: none; overflow: hidden; }
.tab { height: 19px; display: flex; align-items: center; padding-top: 3px; color: #c4c4c4; white-space: nowrap; }
.tab.on { background: #3c3c3c; border-radius: 3px 3px 0 0; }
.tab.focus { border-top: 2px solid #2c5d87; border-radius: 0; width: 94px; padding: 1px 0 0 7px; gap: 3px; }
.tools { margin-left: auto; display: flex; gap: 9px; padding-right: 11px; align-items: center; color: #c4c4c4; }
.inspector .tools { padding-right: 12px; }
.bar { height: 20px; display: flex; align-items: center; background: #3c3c3c; border-top: 1px solid #232323; padding-left: 6px; flex: none; }
.bar > svg:first-child, .bar > .caret { margin-top: -1px; }
.caret { margin-left: 4px; }
.search { margin-left: 12px; width: 208px; height: 16px; background: #2a2a2a; border: 1px solid #1d1d1d; border-radius: 4px; display: flex; align-items: center; padding-left: 4px; }
.ph { color: #777; margin-left: 4px; font-size: 11.5px; }
.pop { margin-left: auto; margin-right: 2px; }
.search.wide { margin-left: auto; width: 318px; }

.tree { border-top: 1px solid #232323; flex: 1; background: linear-gradient(to right, #303030 31px, #383838 31px); color: #d2d2d2; }
.row { height: 16px; display: flex; align-items: center; white-space: nowrap; }
.row i { width: 12px; display: flex; justify-content: center; margin-right: 1px; }
.row i.open { justify-content: flex-start; padding-left: 1px; }
.row span, .row b { margin-left: 3px; }
.scene { background: #4d4d4d; padding-left: 33px; border-bottom: 1px solid #2e2e2e; height: 17px; margin-bottom: -1px; }
.scene .f { margin-right: 4px; }
.scene b { margin-left: 4px; letter-spacing: .05px; }
.scene .end { margin-left: auto; margin-right: 10px; }
.d1 { padding-left: 46px; }
.d2 { padding-left: 60px; }
.d3 { padding-left: 74px; }
.blue { color: #7eadf5; }
.chev { margin-left: auto; margin-right: 4px; }
.sel { background: linear-gradient(to right, #35507b 31px, #2c5d87 31px); }

.t-scene { padding-left: 8px; width: 78px; gap: 5px; letter-spacing: .1px; }
.t-game { padding-left: 7px; width: 76px; gap: 3px; }
.t-anim { padding-left: 8px; width: 90px; gap: 4px; }
.anim-body { display: flex; flex: 1; }
.layers-col { width: 312px; border-right: 1px solid #1e1e1e; display: flex; flex-direction: column; }
.sub { padding-left: 4px; }
.seg { height: 19px; line-height: 19px; border-left: 1px solid #232323; border-right: 1px solid #232323; padding: 0 4px; margin-right: -1px; white-space: nowrap; }
.seg:first-child { width: 49px; }
.seg.on { background: #505050; }
.eye { margin-left: auto; margin-right: 4px; }
.add { height: 22px; border-top: 1px solid #232323; border-bottom: 1px solid #232323; display: flex; align-items: center; justify-content: flex-end; padding-right: 11px; background: #3c3c3c; }
.layer-item { margin-top: 3px; height: 42px; background: #4d4d4d; border-bottom: 1px solid #232323; display: grid; grid-template-columns: 17px 1fr 13px; grid-template-rows: 27px 4px; padding: 0 11px 0 5px; align-items: center; }
.layer-item .weight { grid-column: 2 / 4; height: 2px; background: #8a8a8a; margin-right: -2px; margin-top: -1px; }
.grip { width: 10px; height: 4px; border-top: 1px solid #6a6a6a; border-bottom: 1px solid #6a6a6a; margin-top: -8px; }
.graph-col { width: 485px; display: flex; flex-direction: column; }
.crumb { padding-left: 0; }
.crumb span:first-child { background: #383838; height: 19px; line-height: 19px; width: 77px; padding-left: 6px; white-space: nowrap; }
.live { margin-left: auto; background: #505050; height: 19px; line-height: 19px; padding: 0 4px; margin-right: 1px; color: #bdbdbd; border-left: 1px solid #232323; white-space: nowrap; width: 90px; }
.canvas { height: 324px; border-top: 1px solid #1b1b1b; position: relative; background-color: #2a2a2a; background-image: linear-gradient(to right, #191919 1px, transparent 1px), linear-gradient(#191919 1px, transparent 1px), linear-gradient(to right, #222 1px, transparent 1px), linear-gradient(#222 1px, transparent 1px); background-size: 100px 100px, 100px 100px, 10px 10px, 10px 10px; background-position: 99px 0, 0 99px, 9px 0, 0 9px; }
.wires { position: absolute; left: 0; top: 0; }
.node { position: absolute; border-radius: 4px; text-align: center; color: #e4e4e4; box-shadow: 0 0 2px #111, inset 0 1px 0 #ffffff30; padding-right: 3px; }
.any { left: 50px; top: 20px; width: 160px; height: 29px; line-height: 29px; background: linear-gradient(#5ba08c, #386a62); }
.goingup { left: 240px; top: 50px; width: 200px; height: 39px; line-height: 29px; background: linear-gradient(#55565a, #454649); letter-spacing: -.1px; }
.entry { left: 50px; top: 120px; width: 160px; height: 29px; line-height: 29px; background: linear-gradient(#228243, #0c5727); }
.def { left: 268px; top: 204px; width: 200px; height: 39px; line-height: 29px; background: linear-gradient(#c56f1d, #94500f); }
.path { height: 17px; background: #3c3c3c; text-align: right; font-size: 10px; line-height: 18px; padding-right: 4px; letter-spacing: .15px; }

.t-proj { width: 79px; padding-left: 6px; gap: 3px; }
.t-con { padding-left: 10px; width: 96px; gap: 5px; }
.tab.t-con svg { margin-top: -3px; }
.t-uvc { letter-spacing: -.05px; }
.pb { width: 26px; height: 19px; border-left: 1px solid #232323; display: flex; align-items: center; justify-content: center; padding-right: 1px; }
.search.wide + .pb { margin-left: 2px; }
.dimstar { color: #858585; }
.hid { width: 40px; padding-right: 3px; }
.proj-body { display: flex; flex: 1; border-top: 1px solid #232323; }
.folders { width: 206px; color: #d2d2d2; }
.folders .row { padding-left: 2px; }
.folders .row i { margin-right: 3px; }
.folders .row b { margin-left: 4px; }
.folders .row.gap b { margin-left: 3px; }
.folders .row.k { padding-left: 16px; }
.folders .gap { margin-top: 15px; }
.folders .on { background: #4d4d4d; }
.assets { flex: 1; border-left: 1px solid #232323; display: flex; flex-direction: column; background: #333; }
.where { height: 21px; background: #3c3c3c; border-bottom: 1px solid #232323; display: flex; align-items: center; gap: 5.5px; padding-left: 4px; }
.where b { color: #d2d2d2; letter-spacing: 0; }
.grid { display: flex; padding: 18px 0 0 9px; flex: 1; }
.asset { width: 76px; display: flex; flex-direction: column; align-items: center; gap: 9px; font-size: 10px; line-height: 14px; letter-spacing: .15px; }
.zoombar { height: 20px; background: #383838; border-top: 1px solid #232323; display: flex; align-items: center; justify-content: flex-end; padding: 0 15px 1px 0; }

.t-insp { width: 93px; padding-left: 9px; gap: 5px; }
.insp-wrap { display: flex; flex: 1; border-top: 1px solid #232323; }
.insp { width: 298px; display: flex; flex-direction: column; }
.scroll { width: 13px; background: #323232; display: flex; flex-direction: column; align-items: center; padding: 5px 0 5px 0; }
.thumbbar { width: 10px; margin-top: 75px; margin-bottom: auto; height: 520px; background: #5f5f5f; border-radius: 5px; }
.group { padding-left: 19px; }
.g0 { height: 67px; }
.g1 { height: 211px; padding-top: 4px; }
.g2 { padding-top: 4px; height: 104px; }
.p { height: 20px; display: flex; align-items: center; }
.p label { width: 121px; flex: none; display: flex; align-items: center; }
.p .num { flex: none; }
.g0 label { width: 100px; }
.unlink { margin-left: auto; margin-right: 7px; }
.p em { font-style: normal; flex: none; }
.g0 em { margin-left: 2px; width: 14px; }
.g0 .num + em { margin-left: 5.500px; width: 14.500px; }
.num { width: 39.500px; height: 18px; background: #2a2a2a; border: 1px solid #1d1d1d; border-radius: 3px; padding: 0 2px; overflow: hidden; white-space: nowrap; color: #d2d2d2; }
.comp { height: 22px; background: #3e3e3e; border-top: 1px solid #1f1f1f; border-bottom: 1px solid #303030; display: flex; align-items: center; padding: 1px 11px 0 6px; flex: none; color: #d6d6d6; }
.ci { margin-left: 6px; margin-right: 4px; width: 15px; }
.cb { width: 14px; height: 14px; background: #2a2a2a; border: 1px solid #191919; border-radius: 2px; display: grid; place-items: center; color: #eee; flex: none; }
.comp b { margin-left: 6px; }
.comp .h { margin-left: auto; }
.comp .h + svg { margin: 0 12px 0 8px; }
.obj, .sel-box, .txt, .color { width: 154px; height: 18px; border-radius: 3px; display: flex; align-items: center; white-space: nowrap; color: #d2d2d2; }
.obj, .txt { background: #2a2a2a; border: 1px solid #1d1d1d; padding: 0 0 0 3px; gap: 2px; }
.tg { margin-left: auto; color: #c4c4c4; width: 18px; height: 16px; background: #383838; display: grid; place-items: center; border-radius: 0 3px 3px 0; }
.sel-box { background: #515151; border: 1px solid #303030; padding: 0 5px 2px 3px; justify-content: space-between; color: #e4e4e4; letter-spacing: .1px; }
.sel-box svg { color: #c4c4c4; margin-top: 1px; }
.color { border: 1px solid #1d1d1d; gap: 3px; }
.swatch { width: 134px; height: 16px; background: #fff; }
.p .fx { margin-left: 4px; width: 12px; }
.foldrow { margin-left: -13px; gap: 4px; }
.in label { padding-left: 15px; }
.info { margin: 0 4px 0 18px; height: 78px; border: 1px solid #232323; border-radius: 3px; background: #404040; display: flex; padding: 2px 0 0 5px; gap: 4px; flex: none; }
.info svg { margin-top: 21px; }
.info p { margin: 0; font-size: 10px; line-height: 12px; color: #bdbdbd; white-space: nowrap; letter-spacing: .06px; }
.material { margin-top: 8px; height: 55px; border-top: 1px solid #1f1f1f; background: #3c3c3c; display: flex; flex: none; }
.mat-side { width: 44px; padding: 10px 0 0 7px; }
.thumb { width: 24px; height: 24px; background: #fff; margin-left: 13px; margin-bottom: 5px; }
.mat-main { flex: 1; padding-right: 5px; }
.mat-head { height: 26px; display: flex; align-items: center; padding: 0 2px 0 12px; font-size: 13px; color: #b4b4b4; letter-spacing: .13px; }
.mat-head svg:nth-of-type(1) { margin-left: auto; margin-right: 8px; }
.mat-shader { display: flex; align-items: center; margin-top: 1px; padding-left: 9px; color: #7c7c7c; height: 20px; }
.mat-shader label { width: 51px; }
.shader-box, .edit { height: 18px; background: #464646; border: 1px solid #383838; border-radius: 3px; display: flex; align-items: center; justify-content: space-between; padding: 0 5px 1px 3px; color: #969696; flex: none; }
.shader-box { width: 142px; margin-right: 4px; }
.edit { width: 43px; padding: 0 0 1px 5px; }
.strip { height: 12px; border-top: 1px solid #1f1f1f; border-bottom: 1px solid #1f1f1f; flex: none; }
.addc { margin: 8px 0 0 34px; width: 230px; height: 24px; background: #585858; border: 1px solid #303030; border-radius: 3px; color: #eee; font: inherit; letter-spacing: -.15px; padding: 0; }

.status { height: 22px; display: flex; justify-content: flex-end; background: #191919; flex: none; }
.status div { width: 26.500px; border-left: 1px solid #2c2c2c; display: grid; place-items: center; }

.taskbar { height: 30px; background: #060606; display: flex; flex: none; }
.task { width: 37px; display: grid; place-items: center; position: relative; flex: none; }
.start { width: 34px; }
.views { width: 36px; margin-right: 2px; }
.run::after { content: ""; position: absolute; bottom: 0; left: 5px; right: 4px; height: 2px; background: #76b9ed; }
.active { background: #3b3b3b; }
.active::after { left: 0; right: 0; }
.px64 { font: bold 8px "Liberation Mono", monospace; fill: #111; letter-spacing: 0; }
.skype { font: bold 12px Roboto, sans-serif; fill: #fff; }
.tray { flex: 1; display: flex; align-items: center; color: #fff; font: 12px/16px "Open Sans", sans-serif; letter-spacing: -.3px; padding-left: 389px; }
.avg { margin-left: 9px; }
.temp { color: #00f000; font: 9.5px/16px "DejaVu Sans", sans-serif; margin-left: 7px; width: 19px; letter-spacing: -.6px; }
.bt { margin-left: 8px; }
.bat { margin-left: 11px; }
.wifi { margin-left: 10px; }
.vol { margin-left: 7px; }
.lang { margin-left: 10px; width: 36px; }
.clock { white-space: nowrap; width: 67px; }
.desk { width: 1px; align-self: stretch; background: #555; margin-left: auto; margin-right: 4px; }

.marks { position: absolute; left: 0; top: 0; pointer-events: none; }
.highlight { mix-blend-mode: multiply; fill: #ffff00; }
.note-text { fill: #fff200; font: bold 14px Lato, "Open Sans", sans-serif; letter-spacing: 0; }
```
